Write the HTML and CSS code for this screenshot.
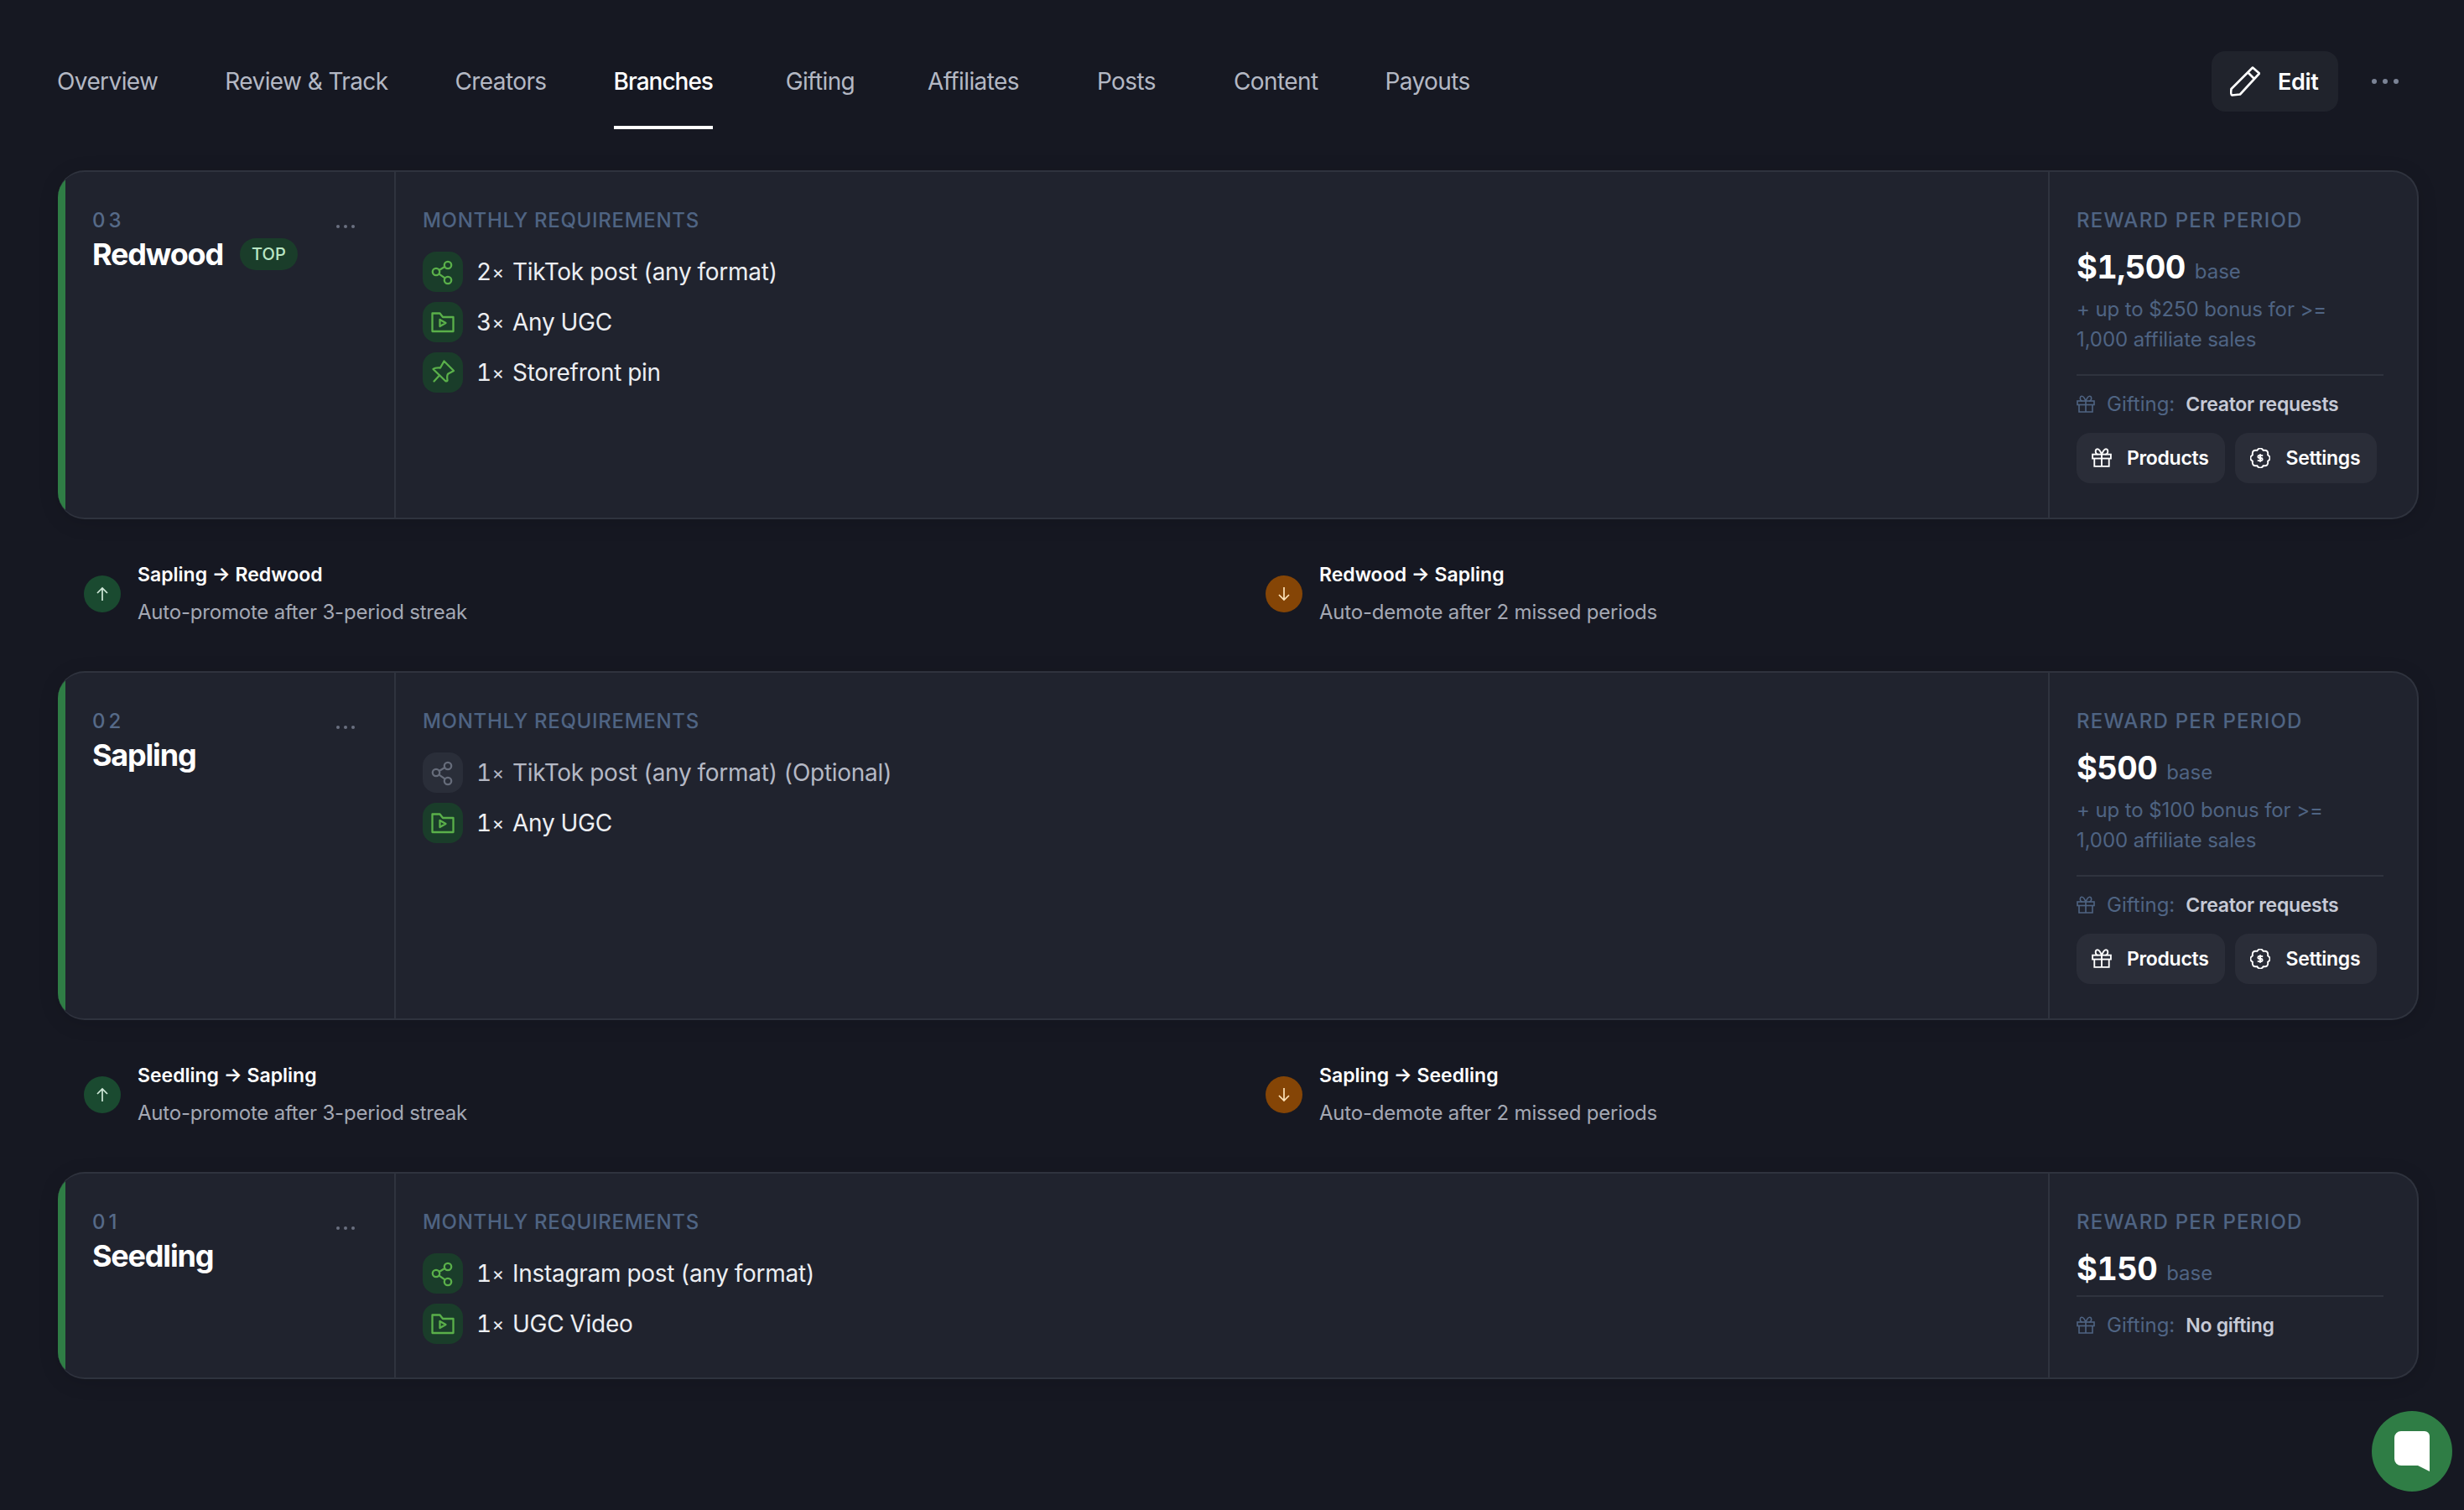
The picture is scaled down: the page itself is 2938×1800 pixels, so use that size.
FILE: index.html
```html
<!DOCTYPE html>
<html lang="en">
  <head>
    <meta charset="UTF-8" />
    <title>Branches</title>
    <link rel="stylesheet" href="styles.css">
  </head>
  <body>
    <svg class="defs" width="0" height="0">
      <defs>
        <symbol id="i-share" viewBox="0 0 48 48">
          <circle cx="30" cy="16" r="4.2" />
          <circle cx="16" cy="24" r="4.2" />
          <circle cx="30" cy="34" r="4.2" />
          <path d="M19.7 21.9 26.3 18.1M19.6 26.6 26.4 31.4" />
        </symbol>
        <symbol id="i-folder" viewBox="0 0 48 48">
          <path d="M11.5 13.5H20.5L24 18H36.5V35H11.5Z" />
          <path d="M20.5 21 27.5 25 20.5 29Z" />
        </symbol>
        <symbol id="i-pin" viewBox="0 0 48 48">
          <path d="M25.5 10.5 37 22 30.5 25.5Q28.5 27 29.5 33.5Q28.5 35 27 34L12.5 20Q15 18 21 18.5Z" />
          <path d="M20 27.5 13.5 34.5" />
        </symbol>
        <symbol id="i-gift" viewBox="1 1 22 22">
          <rect x="2" y="8" width="20" height="4.5" />
          <path d="M12 8V21M4 12.5V21H20V12.5" />
          <path d="M12 8C10 3 8.5 2 7 2.2C4.5 2.6 4.8 8 8 8M12 8C14 3 15.5 2 17 2.2C19.5 2.6 19.2 8 16 8" />
        </symbol>
        <symbol id="i-badge" viewBox="1.5 1.5 21 21">
          <path d="M19.95 8.71Q24.5 12 19.95 15.29Q20.84 20.84 15.29 19.95Q12 24.5 8.71 19.95Q3.16 20.84 4.05 15.29Q-.5 12 4.05 8.71Q3.16 3.16 8.71 4.05Q12 -.5 15.29 4.05Q20.84 3.16 19.95 8.71Z" />
          <path d="M14.8 9.4H11A1.3 1.3 0 0 0 11 12H13A1.3 1.3 0 0 1 13 14.6H9.2M12 7.8V16.2" />
        </symbol>
        <symbol id="i-up" viewBox="0 0 24 24">
          <path d="M12 20V5M6 11 12 5 18 11" />
        </symbol>
        <symbol id="i-down" viewBox="0 0 24 24">
          <path d="M12 4V19M6 13 12 19 18 13" />
        </symbol>
      </defs>
    </svg>

    <main class="page">
      <nav class="tabs">
        <a class="tab">Overview</a>
        <a class="tab">Review &amp; Track</a>
        <a class="tab">Creators</a>
        <a class="tab active">Branches</a>
        <a class="tab">Gifting</a>
        <a class="tab">Affiliates</a>
        <a class="tab">Posts</a>
        <a class="tab">Content</a>
        <a class="tab">Payouts</a>
        <div class="tab-actions">
          <button class="edit-btn">
            <svg class="edit-icon" viewBox="0 0 36 36">
              <path d="M27 1.5 35 8.5 12 33.5 2.5 34.5Q.5 34 1.5 27Z" />
              <path d="M21.5 7.5 29 15" />
            </svg>
            Edit
          </button>
          <button class="more-btn"><i></i><i></i><i></i></button>
        </div>
      </nav>

      <!-- Redwood -->
      <article class="branch">
        <div class="branch-side">
          <div class="branch-info">
            <div class="branch-num">03</div>
            <div class="branch-title">
              <h2 class="branch-name">Redwood</h2>
              <span class="badge-top">TOP</span>
            </div>
          </div>
          <button class="side-more"><i></i><i></i><i></i></button>
        </div>
        <div class="branch-reqs">
          <div class="label">MONTHLY REQUIREMENTS</div>
          <ul class="req-list">
            <li class="req"><span class="req-icon"><svg><use href="#i-share" /></svg></span>2<span class="times">×</span> TikTok post (any format)</li>
            <li class="req"><span class="req-icon"><svg><use href="#i-folder" /></svg></span>3<span class="times">×</span> Any UGC</li>
            <li class="req"><span class="req-icon"><svg><use href="#i-pin" /></svg></span>1<span class="times">×</span> Storefront pin</li>
          </ul>
        </div>
        <div class="branch-reward">
          <div class="label label-wide">REWARD PER PERIOD</div>
          <div class="price"><strong>$1,500</strong><span>base</span></div>
          <p class="bonus">+ up to $250 bonus for &gt;=<br />1,000 affiliate sales</p>
          <div class="gifting">
            <svg class="gift-small"><use href="#i-gift" /></svg>
            <span class="gift-label">Gifting:</span>
            <span class="gift-value">Creator requests</span>
          </div>
          <div class="reward-btns">
            <button class="small-btn"><svg><use href="#i-gift" /></svg>Products</button>
            <button class="small-btn"><svg><use href="#i-badge" /></svg>Settings</button>
          </div>
        </div>
      </article>

      <section class="moves">
        <div class="move">
          <span class="move-icon up"><svg><use href="#i-up" /></svg></span>
          <div>
            <div class="move-title">Sapling → Redwood</div>
            <div class="move-desc">Auto-promote after 3-period streak</div>
          </div>
        </div>
        <div class="move">
          <span class="move-icon down"><svg><use href="#i-down" /></svg></span>
          <div>
            <div class="move-title">Redwood → Sapling</div>
            <div class="move-desc">Auto-demote after 2 missed periods</div>
          </div>
        </div>
      </section>

      <!-- Sapling -->
      <article class="branch">
        <div class="branch-side">
          <div class="branch-info">
            <div class="branch-num">02</div>
            <div class="branch-title">
              <h2 class="branch-name">Sapling</h2>
            </div>
          </div>
          <button class="side-more"><i></i><i></i><i></i></button>
        </div>
        <div class="branch-reqs">
          <div class="label">MONTHLY REQUIREMENTS</div>
          <ul class="req-list">
            <li class="req optional"><span class="req-icon"><svg><use href="#i-share" /></svg></span>1<span class="times">×</span> TikTok post (any format) (Optional)</li>
            <li class="req"><span class="req-icon"><svg><use href="#i-folder" /></svg></span>1<span class="times">×</span> Any UGC</li>
          </ul>
        </div>
        <div class="branch-reward">
          <div class="label label-wide">REWARD PER PERIOD</div>
          <div class="price"><strong>$500</strong><span>base</span></div>
          <p class="bonus">+ up to $100 bonus for &gt;=<br />1,000 affiliate sales</p>
          <div class="gifting">
            <svg class="gift-small"><use href="#i-gift" /></svg>
            <span class="gift-label">Gifting:</span>
            <span class="gift-value">Creator requests</span>
          </div>
          <div class="reward-btns">
            <button class="small-btn"><svg><use href="#i-gift" /></svg>Products</button>
            <button class="small-btn"><svg><use href="#i-badge" /></svg>Settings</button>
          </div>
        </div>
      </article>

      <section class="moves">
        <div class="move">
          <span class="move-icon up"><svg><use href="#i-up" /></svg></span>
          <div>
            <div class="move-title">Seedling → Sapling</div>
            <div class="move-desc">Auto-promote after 3-period streak</div>
          </div>
        </div>
        <div class="move">
          <span class="move-icon down"><svg><use href="#i-down" /></svg></span>
          <div>
            <div class="move-title">Sapling → Seedling</div>
            <div class="move-desc">Auto-demote after 2 missed periods</div>
          </div>
        </div>
      </section>

      <!-- Seedling -->
      <article class="branch">
        <div class="branch-side">
          <div class="branch-info">
            <div class="branch-num">01</div>
            <div class="branch-title">
              <h2 class="branch-name">Seedling</h2>
            </div>
          </div>
          <button class="side-more"><i></i><i></i><i></i></button>
        </div>
        <div class="branch-reqs">
          <div class="label">MONTHLY REQUIREMENTS</div>
          <ul class="req-list">
            <li class="req"><span class="req-icon"><svg><use href="#i-share" /></svg></span>1<span class="times">×</span> Instagram post (any format)</li>
            <li class="req"><span class="req-icon"><svg><use href="#i-folder" /></svg></span>1<span class="times">×</span> UGC Video</li>
          </ul>
        </div>
        <div class="branch-reward">
          <div class="label label-wide">REWARD PER PERIOD</div>
          <div class="price no-bonus"><strong>$150</strong><span>base</span></div>
          <div class="gifting">
            <svg class="gift-small"><use href="#i-gift" /></svg>
            <span class="gift-label">Gifting:</span>
            <span class="gift-value">No gifting</span>
          </div>
        </div>
      </article>
    </main>

    <button class="chat-btn">
      <svg viewBox="0 0 42 48" width="42" height="48">
        <path d="M8 0H36A6 6 0 0 1 42 6V48L28 41H8A8 8 0 0 1 0 33V8A8 8 0 0 1 8 0Z" />
      </svg>
    </button>
  </body>
</html>
```

FILE: styles.css
```css
* {
  margin: 0;
  padding: 0;
  box-sizing: border-box;
}

body {
  font-family: "Inter", "Liberation Sans", sans-serif;
  background: #161822;
  color: #fff;
  height: 1800px;
  overflow: hidden;
}

button {
  font-family: inherit;
  border: none;
  background: none;
  color: inherit;
}

.defs {
  display: block;
  height: 0;
}

.page {
  padding: 40px 54px 0 68px;
}

/* tabs */
.tabs {
  display: flex;
  align-items: center;
  gap: 80px;
  margin-bottom: 49px;
}

.tab {
  min-width: 96px;
  padding: 40px 0 36px;
  border-bottom: 4px solid transparent;
  font-size: 28px;
  line-height: 34px;
  text-align: center;
  color: #b4b8c4;
  letter-spacing: -0.6px;
}

.tab.active {
  color: #fff;
  font-weight: 500;
  letter-spacing: -1px;
  border-bottom-color: #fff;
}

.tab-actions {
  margin-left: auto;
  margin-right: 4px;
  display: flex;
  align-items: center;
  gap: 20px;
}

.edit-btn {
  width: 151px;
  height: 72px;
  display: flex;
  align-items: center;
  gap: 21px;
  padding-left: 22px;
  background: #20232c;
  border-radius: 16px;
  font-size: 27px;
  font-weight: 600;
  letter-spacing: -0.3px;
}

.edit-icon {
  width: 36px;
  height: 36px;
  fill: none;
  stroke: #fff;
  stroke-width: 2.6;
  stroke-linejoin: round;
}

.more-btn {
  width: 72px;
  height: 72px;
  display: flex;
  align-items: center;
  justify-content: center;
  gap: 7px;
}

.more-btn i {
  width: 6px;
  height: 6px;
  border-radius: 50%;
  background: #7b8396;
}

/* branch card */
.branch {
  display: grid;
  grid-template-columns: 403px 1fr 440px;
  margin-left: 1px;
  background: #20232e;
  border: 2px solid #2f333e;
  border-left: none;
  border-radius: 32px;
  overflow: hidden;
  box-shadow: 0 4px 24px rgba(0, 0, 0, 0.12);
}

.branch-side {
  display: flex;
  justify-content: space-between;
  align-items: flex-start;
  padding: 44px 47px 40px 32px;
  border-left: 9px solid #2f7d45;
  border-right: 2px solid #2f333e;
}

.branch-num {
  font-size: 24px;
  line-height: 28px;
  letter-spacing: 4px;
  color: #566a88;
  font-weight: 500;
}

.branch-title {
  display: flex;
  align-items: center;
  gap: 20px;
  margin-top: 4px;
}

.branch-name {
  font-size: 36px;
  line-height: 44px;
  font-weight: 700;
  letter-spacing: -1.2px;
}

.badge-top {
  width: 69px;
  height: 38px;
  display: flex;
  align-items: center;
  justify-content: center;
  border-radius: 19px;
  background: #1a3d2a;
  color: #b9e6c4;
  font-size: 20px;
  font-weight: 500;
}

.side-more {
  display: flex;
  gap: 5px;
  margin-top: 19px;
}

.side-more i {
  width: 4px;
  height: 4px;
  border-radius: 50%;
  background: #6a7080;
}

.branch-reqs {
  padding: 44px 32px 40px;
}

.label {
  font-size: 24px;
  line-height: 28px;
  font-weight: 500;
  color: #4f6483;
  letter-spacing: 0.7px;
}

.label-wide {
  letter-spacing: 1.25px;
}

.req-list {
  list-style: none;
  margin-top: 23px;
  display: flex;
  flex-direction: column;
  gap: 12px;
}

.req {
  display: flex;
  align-items: center;
  height: 48px;
  font-size: 28px;
  font-variant-numeric: tabular-nums;
  letter-spacing: -0.3px;
  white-space: pre;
  color: #eceef2;
}

.times {
  font-size: 22px;
  margin: 0 3px 0 1px;
}

.req-icon {
  width: 48px;
  height: 48px;
  margin-right: 16px;
  border-radius: 16px;
  background: #1a3d2a;
}

.req-icon svg {
  display: block;
  width: 48px;
  height: 48px;
  fill: none;
  stroke: #5ab04a;
  stroke-width: 2.3;
  stroke-linejoin: round;
  stroke-linecap: round;
}

.req.optional {
  color: #b4b8c4;
}

.req.optional .req-icon {
  background: #2a2e39;
}

.req.optional .req-icon svg {
  stroke: #666c7a;
}

.branch-reward {
  padding: 44px 40px 41px 32px;
  border-left: 2px solid #2f333e;
}

.price {
  display: flex;
  align-items: baseline;
  gap: 11px;
  margin-top: 19px;
  line-height: 44px;
}

.price strong {
  font-size: 38px;
  font-weight: 700;
  letter-spacing: -0.6px;
  font-variant-numeric: tabular-nums;
}

.price span {
  font-size: 24px;
  color: #4f6483;
}

.price.no-bonus {
  margin-bottom: 4px;
}

.bonus {
  margin-top: 5px;
  margin-bottom: 23px;
  font-size: 24px;
  line-height: 36px;
  letter-spacing: -0.1px;
  color: #4f6483;
}

.gifting {
  display: flex;
  align-items: center;
  padding-top: 18px;
  border-top: 2px solid #2f333e;
  font-size: 24px;
  line-height: 32px;
}

.gift-small {
  width: 22px;
  height: 22px;
  margin-right: 14px;
  fill: none;
  stroke: #4f6483;
  stroke-width: 1.6;
  flex: none;
}

.gift-label {
  color: #4f6483;
  margin-right: 13px;
}

.gift-value {
  color: #c6cad6;
  font-size: 23px;
  font-weight: 600;
  letter-spacing: -0.3px;
}

.reward-btns {
  display: flex;
  gap: 12px;
  margin-top: 18px;
}

.small-btn {
  height: 60px;
  display: flex;
  align-items: center;
  gap: 18px;
  padding: 0 20px 0 18px;
  background: #2a2d38;
  border-radius: 16px;
  font-size: 23px;
  font-weight: 600;
  letter-spacing: -0.3px;
}

.small-btn svg {
  width: 24px;
  height: 24px;
  fill: none;
  stroke: #fff;
  stroke-width: 1.7;
  flex: none;
}

/* promote / demote rows */
.moves {
  display: grid;
  grid-template-columns: repeat(2, 1fr);
  gap: 66px;
  height: 181px;
  padding: 0 32px 4px;
  align-items: center;
}

.move {
  display: flex;
  align-items: center;
  gap: 20px;
}

.move-icon {
  width: 44px;
  height: 44px;
  border-radius: 50%;
  display: flex;
  align-items: center;
  justify-content: center;
}

.move-icon svg {
  width: 24px;
  height: 24px;
  fill: none;
  stroke-width: 1.7;
}

.move-icon.up {
  background: #1a4a30;
}

.move-icon.up svg {
  stroke: #cfe8d8;
}

.move-icon.down {
  background: #854506;
}

.move-icon.down svg {
  stroke: #fde2b8;
}

.move-title {
  font-size: 23px;
  line-height: 32px;
  font-weight: 600;
}

.move-desc {
  margin-top: 13px;
  font-size: 24px;
  line-height: 32px;
  letter-spacing: -0.2px;
  color: #a4a8b4;
}

/* chat */
.chat-btn {
  position: fixed;
  right: 14px;
  bottom: 22px;
  width: 96px;
  height: 96px;
  border-radius: 50%;
  background: #2f7d45;
  display: flex;
  align-items: center;
  justify-content: center;
}

.chat-btn svg {
  fill: #fff;
}
```
